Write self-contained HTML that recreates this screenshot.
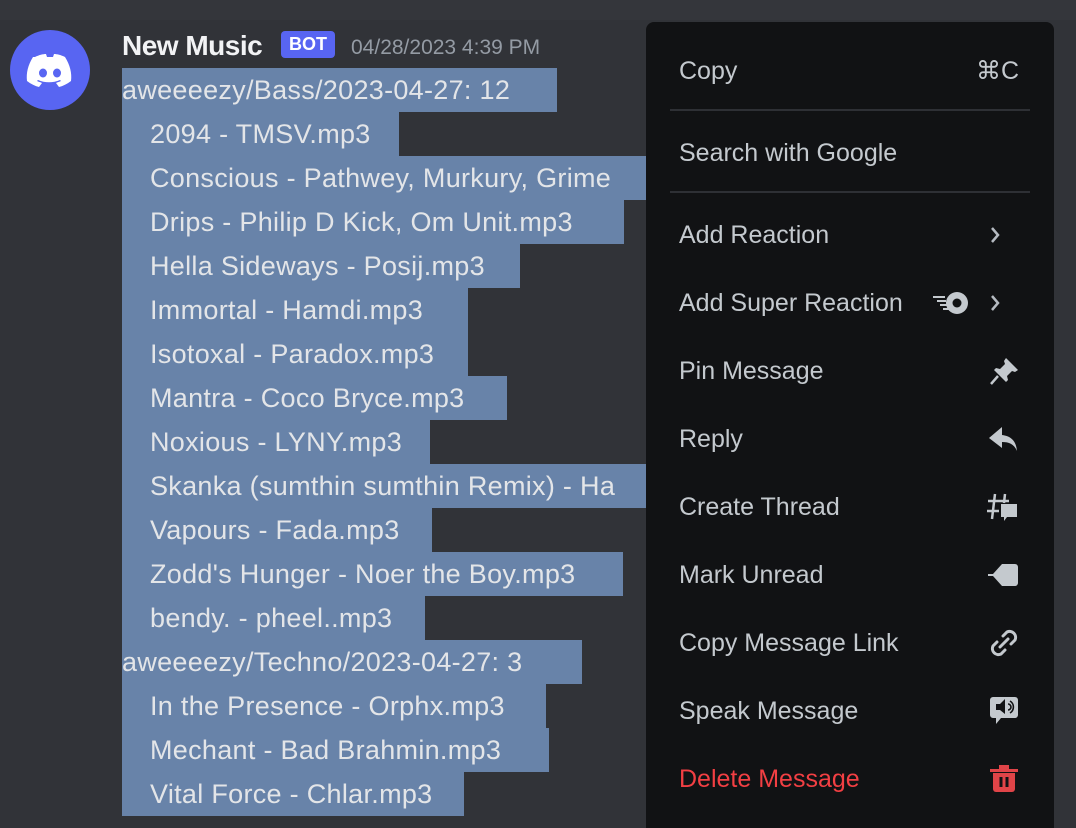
<!DOCTYPE html>
<html><head><meta charset="utf-8"><style>
*{margin:0;padding:0;box-sizing:border-box}
html,body{width:1076px;height:828px;overflow:hidden}
body{background:#313338;font-family:"Liberation Sans",sans-serif;position:relative}
.top{position:absolute;left:0;top:0;width:1076px;height:20px;background:#34363b}
.av{position:absolute;left:10px;top:30px;width:80px;height:80px;border-radius:50%;background:#5865f2}
.name{position:absolute;left:122px;top:30px;font-size:28px;color:#f2f3f5;font-weight:bold;letter-spacing:-0.5px}
.bot{position:absolute;left:281px;top:31px;width:54px;height:27px;border-radius:4px;background:#5865f2;color:#fff;font-size:18px;font-weight:bold;text-align:center;line-height:27px}
.ts{position:absolute;left:351px;top:36px;font-size:21px;color:#949ba4}
.row{position:absolute;left:122px;height:44px;background:#6883a9;color:#e3e5e8;font-size:27px;line-height:44px;white-space:nowrap;overflow:hidden;letter-spacing:0.3px}
.row.i{padding-left:28px}
.menu{position:absolute;left:646px;top:22px;width:408px;height:806px;background:#111214;border-radius:8px 8px 0 0}
.it{position:absolute;left:33px;font-size:25px;color:#c4c9ce;line-height:30px}
.sep{position:absolute;left:24px;width:360px;height:2px;background:#2e3035}
.ic{position:absolute;left:340px;width:36px;height:36px}
</style></head><body>
<div class="top"></div>
<div class="av"><svg width="80" height="80" viewBox="0 0 80 80"><path d="M25 27c4-2 8-3 11-3l1 3c2 0 4 0 6 0l1-3c3 0 7 1 11 3 5 8 7 16 6 24-4 3-8 5-12 6l-3-4c2-1 3-1 5-2l-1-1c-7 3-15 3-22 0l-1 1c2 1 3 1 5 2l-3 4c-4-1-8-3-12-6-1-8 1-16 6-24z" fill="#fff"/><ellipse cx="33" cy="43" rx="4" ry="4.5" fill="#5865f2"/><ellipse cx="47" cy="43" rx="4" ry="4.5" fill="#5865f2"/></svg></div>
<div class="name">New Music</div>
<div class="bot">BOT</div>
<div class="ts">04/28/2023 4:39 PM</div>

<div class="row" style="top:68px;width:435px">aweeeezy/Bass/2023-04-27: 12</div>
<div class="row i" style="top:112px;width:277px">2094 - TMSV.mp3</div>
<div class="row i" style="top:156px;width:540px">Conscious - Pathwey, Murkury, Grime</div>
<div class="row i" style="top:200px;width:502px">Drips - Philip D Kick, Om Unit.mp3</div>
<div class="row i" style="top:244px;width:398px">Hella Sideways - Posij.mp3</div>
<div class="row i" style="top:288px;width:346px">Immortal - Hamdi.mp3</div>
<div class="row i" style="top:332px;width:346px">Isotoxal - Paradox.mp3</div>
<div class="row i" style="top:376px;width:385px">Mantra - Coco Bryce.mp3</div>
<div class="row i" style="top:420px;width:308px">Noxious - LYNY.mp3</div>
<div class="row i" style="top:464px;width:540px">Skanka (sumthin sumthin Remix) - Ha</div>
<div class="row i" style="top:508px;width:310px">Vapours - Fada.mp3</div>
<div class="row i" style="top:552px;width:501px">Zodd's Hunger - Noer the Boy.mp3</div>
<div class="row i" style="top:596px;width:303px">bendy. - pheel..mp3</div>
<div class="row" style="top:640px;width:460px">aweeeezy/Techno/2023-04-27: 3</div>
<div class="row i" style="top:684px;width:424px">In the Presence - Orphx.mp3</div>
<div class="row i" style="top:728px;width:427px">Mechant - Bad Brahmin.mp3</div>
<div class="row i" style="top:772px;width:342px">Vital Force - Chlar.mp3</div>

<div class="menu">
<div class="it" style="top:34px">Copy</div>
<div class="it" style="top:34px;left:330px">⌘C</div>
<div class="sep" style="top:87px"></div>
<div class="it" style="top:116px">Search with Google</div>
<div class="sep" style="top:169px"></div>
<div class="it" style="top:198px">Add Reaction</div>
<svg class="ic" style="top:195px;left:331px" width="36" height="36"><path d="M15 11l6 7-6 7" stroke="#b5bac1" stroke-width="2.5" fill="none"/></svg>
<div class="it" style="top:266px">Add Super Reaction</div>
<svg class="ic" style="top:263px;left:286px;width:40px" width="40" height="36" viewBox="0 0 40 36"><circle cx="25" cy="18" r="11" fill="#c4c9ce"/><circle cx="25" cy="18" r="4.5" fill="#111214"/><path d="M1 12h12M5 16h9M8 20h7M11 24h6" stroke="#c4c9ce" stroke-width="2"/></svg>
<svg class="ic" style="top:263px;left:331px" width="36" height="36"><path d="M15 11l6 7-6 7" stroke="#b5bac1" stroke-width="2.5" fill="none"/></svg>
<div class="it" style="top:334px">Pin Message</div>
<svg class="ic" style="top:331px" width="36" height="36"><path d="M20 5l12 12-3 2-3-1-5 5 1 4-2 2-12-12 2-2 4 1 5-5-1-3z" fill="#c4c9ce"/><path d="M12 23l-7 8" stroke="#c4c9ce" stroke-width="2.5"/></svg>
<div class="it" style="top:402px">Reply</div>
<svg class="ic" style="top:399px" width="36" height="36"><path d="M16 6L3 17l13 10v-6c7 0 12 2 15 9-1-10-6-15-15-16z" fill="#c4c9ce"/></svg>
<div class="it" style="top:470px">Create Thread</div>
<svg class="ic" style="top:467px" width="36" height="36"><path d="M9 5l-3 25M19 5l-1 9M2 12h21M1 22h12" stroke="#c4c9ce" stroke-width="2.5"/><path d="M15 15h16v13H21l-3 4v-4h-3z" fill="#c4c9ce"/></svg>
<div class="it" style="top:538px">Mark Unread</div>
<svg class="ic" style="top:535px" width="36" height="36"><path d="M2 17h5l9-10h13a3 3 0 0 1 3 3v16a3 3 0 0 1-3 3H16l-9-10H2z" fill="#c4c9ce"/></svg>
<div class="it" style="top:606px">Copy Message Link</div>
<svg class="ic" style="top:603px" width="36" height="36"><path d="M17 11l4-4a6 6 0 0 1 8 8l-4 4M19 25l-4 4a6 6 0 0 1-8-8l4-4M14 22l8-8" stroke="#c4c9ce" stroke-width="3" fill="none" stroke-linecap="round"/></svg>
<div class="it" style="top:674px">Speak Message</div>
<svg class="ic" style="top:671px" width="36" height="36"><path d="M7 4h22a3 3 0 0 1 3 3v15a3 3 0 0 1-3 3H15l-5 6v-6H7a3 3 0 0 1-3-3V7a3 3 0 0 1 3-3z" fill="#c4c9ce"/><path d="M10 11h4l5-5v15l-5-4h-4z" fill="#111214"/><path d="M22 11a3 3 0 0 1 0 6M24 8a7 7 0 0 1 0 12" stroke="#111214" stroke-width="1.6" fill="none"/></svg>
<div class="it" style="top:742px;color:#f23f43">Delete Message</div>
<svg class="ic" style="top:737px" width="36" height="40"><path d="M4 10h28v3H4zM13 6h10v4H13z" fill="#e04448"/><path d="M7 14h22v16a3 3 0 0 1-3 3H10a3 3 0 0 1-3-3z" fill="#e04448"/><path d="M15 18v10M21 18v10" stroke="#111214" stroke-width="3"/></svg>
</div>
</body></html>
